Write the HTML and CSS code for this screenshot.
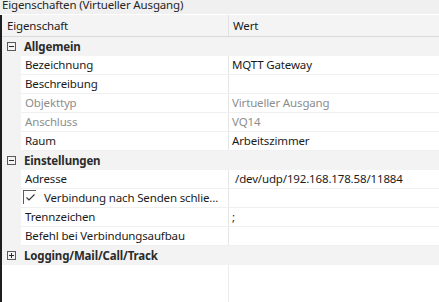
FILE: index.html
```
<html>

<head>
	<link rel="stylesheet" href="styles.css">
</head>

<body>
	<div class="panel">
		<div class="title"><span>Eigenschaften (Virtueller Ausgang)</span></div>
		<div class="body">
			<div class="head">
				<div class="headName">Eigenschaft</div>
				<div class="headValue">Wert</div>
			</div>

			<div class="cat">
				<span class="toggle"><span class="bar"></span></span>
				<span class="catName">Allgemein</span>
			</div>
			<div class="row">
				<div class="gutter"></div>
				<div class="name">Bezeichnung</div>
				<div class="value">MQTT Gateway</div>
			</div>
			<div class="row">
				<div class="gutter"></div>
				<div class="name">Beschreibung</div>
				<div class="value"></div>
			</div>
			<div class="row readonly">
				<div class="gutter"></div>
				<div class="name">Objekttyp</div>
				<div class="value">Virtueller Ausgang</div>
			</div>
			<div class="row readonly">
				<div class="gutter"></div>
				<div class="name">Anschluss</div>
				<div class="value">VQ14</div>
			</div>
			<div class="row">
				<div class="gutter"></div>
				<div class="name">Raum</div>
				<div class="value">Arbeitszimmer</div>
			</div>

			<div class="cat">
				<span class="toggle"><span class="bar"></span></span>
				<span class="catName">Einstellungen</span>
			</div>
			<div class="row">
				<div class="gutter"></div>
				<div class="name">Adresse</div>
				<div class="value path">/dev/udp/192.168.178.58/11884</div>
			</div>
			<div class="row">
				<div class="gutter"></div>
				<div class="name checkName">
					<span class="check">
						<svg width="9" height="7" viewBox="0 0 9 7">
							<path d="M0.5 3.5 L3 6 L8.5 0.5" fill="none" stroke="#333" stroke-width="1.1" />
						</svg>
					</span>
					Verbindung nach Senden schlie...
				</div>
				<div class="value"></div>
			</div>
			<div class="row">
				<div class="gutter"></div>
				<div class="name">Trennzeichen</div>
				<div class="value">;</div>
			</div>
			<div class="row">
				<div class="gutter"></div>
				<div class="name">Befehl bei Verbindungsaufbau</div>
				<div class="value"></div>
			</div>

			<div class="cat">
				<span class="toggle"><span class="bar"></span><span class="bar vertical"></span></span>
				<span class="catName">Logging/Mail/Call/Track</span>
			</div>

			<div class="rest">
				<div class="restLeft"></div>
			</div>
		</div>
	</div>
</body>

</html>
```

FILE: styles.css
```
html,
body {
	margin: 0;
	height: 100%;
	overflow: hidden;
}

body {
	background-color: white;
	font-family: "Noto Sans", "Open Sans", sans-serif;
	font-size: 11.5px;
	letter-spacing: -0.15px;
	color: #1b1b1b;
}

.panel {
	display: flex;
	flex-direction: column;
	height: 100%;
}

.title {
	height: 14px;
	overflow: hidden;

	border-bottom: 1px solid white;
	background-color: #f0f0f0;
}

.title span {
	display: block;
	margin: -3px 0 0 2px;
	line-height: 16px;
	color: #262626;
}

.body {
	display: flex;
	flex-direction: column;
	flex: 1;

	border-left: 2px solid #1e1e1e;
}

.head {
	display: flex;
	height: 21px;

	border-bottom: 1px solid #dadada;
	background-color: #f4f4f4;

	line-height: 21px;
}

.headName {
	width: 221px;
	padding-left: 5px;

	border-right: 1px solid #e2e2e2;
}

.headValue {
	padding-left: 4px;
}

.cat {
	display: flex;
	align-items: center;
	height: 18px;

	border-bottom: 1px solid #f3f3f3;
	background-color: #f3f3f3;
}

.toggle {
	position: relative;
	width: 7px;
	height: 7px;
	margin: 0 8px 0 5px;

	border: 1px solid #5a5a5a;
}

.bar {
	position: absolute;
	left: 1px;
	top: 3px;
	width: 5px;
	height: 1px;

	background-color: #2a2a2a;
}

.bar.vertical {
	left: 3px;
	top: 1px;
	width: 1px;
	height: 5px;
}

.catName {
	font-weight: bold;
	color: #2b2b2b;
}

.row {
	display: flex;
	height: 18px;

	border-bottom: 1px solid #f0f0f0;

	line-height: 18px;
}

.gutter {
	width: 19px;
	margin-bottom: -1px;

	background-color: #f3f3f3;
}

.name {
	width: 203px;
	padding-left: 4px;

	border-right: 1px solid #e6e6e6;
	white-space: nowrap;
	overflow: hidden;
}

.value {
	flex: 1;
	padding-left: 3px;
	white-space: nowrap;
}

.path {
	padding-left: 6px;
}

.readonly {
	color: #8d8d8d;
}

.checkName {
	display: flex;
	align-items: center;
	padding-left: 2px;
	width: 205px;
}

.check {
	display: flex;
	align-items: center;
	justify-content: center;
	width: 12px;
	height: 13px;
	margin: -2px 8px 0 0;

	border-top: 1px solid #5c5c5c;
	border-left: 1px solid #5c5c5c;
}

.rest {
	flex: 1;
	display: flex;
}

.restLeft {
	width: 226px;

	border-right: 1px solid #ececec;
}
```
